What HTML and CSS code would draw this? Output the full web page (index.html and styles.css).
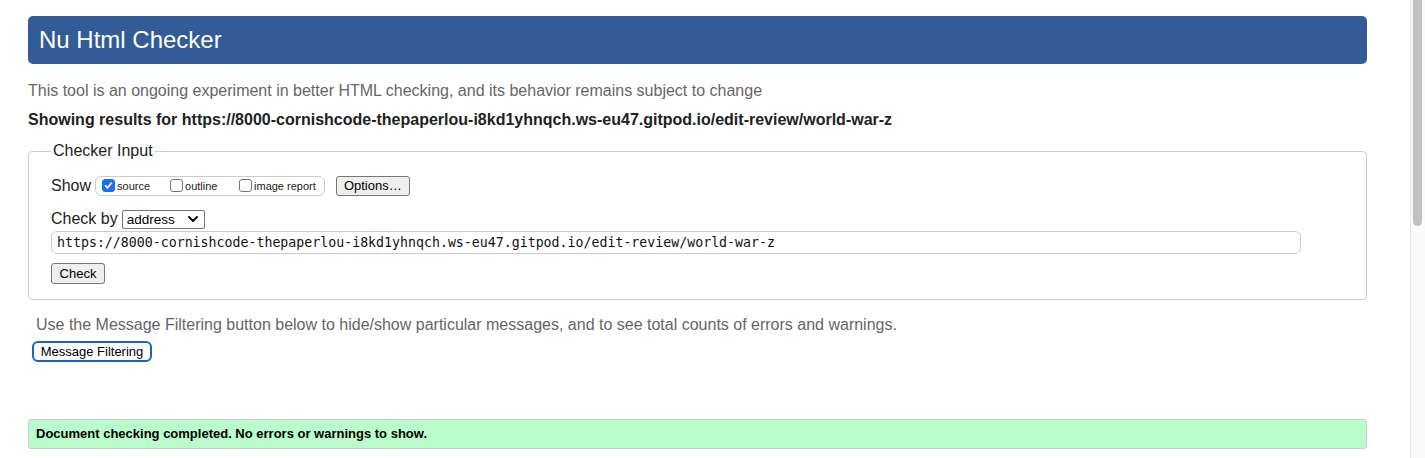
FILE: index.html
```html
<!DOCTYPE html>
<html>
<head>
<meta charset="utf-8">
<title>Nu Html Checker</title>
<link rel="stylesheet" href="styles.css">
</head>
<body>
<div class="page">
  <h1 class="header">Nu Html Checker</h1>
  <p class="intro">This tool is an ongoing experiment in better HTML checking, and its behavior remains subject to change</p>
  <p class="showing">Showing results for https://8000-cornishcode-thepaperlou-i8kd1yhnqch.ws-eu47.gitpod.io/edit-review/world-war-z</p>
  <fieldset class="checker">
    <legend class="legend">Checker Input</legend>
    <div class="row show-row">
      <span class="label">Show</span>
      <span class="show-box">
        <label class="opt"><span class="cb checked"><svg viewBox="0 0 13 13" width="13" height="13"><path d="M3 6.8 L5.4 9.2 L10 3.6" fill="none" stroke="#fff" stroke-width="2" stroke-linecap="round" stroke-linejoin="round"/></svg></span>source</label>
        <label class="opt"><span class="cb"></span>outline</label>
        <label class="opt"><span class="cb"></span>image report</label>
      </span>
      <button class="btn options">Options…</button>
    </div>
    <div class="row by-row">
      <span class="label">Check by</span>
      <span class="select">address<svg class="chev" viewBox="0 0 10 6" width="10" height="6"><path d="M1 1 L5 5 L9 1" fill="none" stroke="#000" stroke-width="1.8" stroke-linecap="round" stroke-linejoin="round"/></svg></span>
    </div>
    <div class="url">https://8000-cornishcode-thepaperlou-i8kd1yhnqch.ws-eu47.gitpod.io/edit-review/world-war-z</div>
    <div class="row"><button class="btn check">Check</button></div>
  </fieldset>
  <p class="filter-note">Use the Message Filtering button below to hide/show particular messages, and to see total counts of errors and warnings.</p>
  <button class="btn filtering">Message Filtering</button>
  <div class="success">Document checking completed. No errors or warnings to show.</div>
</div>
<div class="scrollbar"><div class="thumb"></div></div>
</body>
</html>
```
FILE: styles.css
```css
html, body {
  margin: 0;
  padding: 0;
  background: #fff;
  overflow: hidden;
  height: 458px;
}
body {
  font-family: "Liberation Sans", Arial, sans-serif;
  color: #000;
}
.page {
  width: 1339px;
  margin-left: 28px;
  padding-top: 16px;
}
.header {
  margin: 0;
  height: 48px;
  box-sizing: border-box;
  background: #335b96;
  border-radius: 5px;
  color: #fff;
  font-weight: normal;
  font-size: 24px;
  line-height: 48px;
  padding-left: 11px;
}
.intro {
  margin: 17px 0 0;
  font-size: 16px;
  line-height: 20px;
  color: #666;
}
.showing {
  margin: 9px 0 0;
  font-size: 16px;
  line-height: 20px;
  font-weight: bold;
  color: #222;
}
.checker {
  margin: 12px 0 0;
  padding: 8px 22px 15px;
  border: 1px solid #ccc;
  border-radius: 4px;
  min-width: 0;
}
.legend {
  padding: 0 2px;
  font-size: 16px;
  color: #222;
  margin-left: 0;
}
.row {
  display: flex;
  align-items: center;
}
.label {
  font-size: 16px;
  color: #222;
}
.show-row {
  height: 20px;
  margin-top: 8px;
}
.show-box {
  display: flex;
  align-items: center;
  margin-left: 4px;
  height: 18px;
  border: 1px solid #ccc;
  border-radius: 6px;
  padding: 0 8px 0 6px;
  gap: 0;
}
.opt {
  display: flex;
  align-items: center;
  font-size: 11px;
  color: #222;
}
.opt:nth-child(1) { width: 68px; }
.opt:nth-child(2) { width: 69px; }
.cb {
  width: 11px;
  height: 11px;
  border: 1px solid #767676;
  border-radius: 3px;
  margin-right: 2px;
  display: inline-flex;
  align-items: center;
  justify-content: center;
  box-sizing: content-box;
  position: relative;
  top: -1px;
}
.cb.checked {
  background: #1c6ef2;
  border-color: #1c6ef2;
}
.cb svg { width: 11px; height: 11px; }
.btn {
  font-family: "Liberation Sans", Arial, sans-serif;
  font-size: 13px;
  color: #000;
  background: #efefef;
  border: 1px solid #767676;
  border-radius: 3px;
  padding: 0 6px;
  height: 20px;
  line-height: 18px;
}
.options {
  margin-left: 11px;
  width: 74px;
}
.by-row {
  margin-top: 13px;
  height: 20px;
}
.select {
  margin-left: 4px;
  width: 83px;
  height: 19px;
  box-sizing: border-box;
  border: 1px solid #767676;
  border-radius: 2px;
  font-size: 13.5px;
  padding-left: 4px;
  display: flex;
  align-items: center;
  justify-content: space-between;
  padding-right: 6px;
}
.url {
  margin-top: 2px;
  width: 1250px;
  height: 23px;
  box-sizing: border-box;
  border: 1px solid #ccc;
  border-radius: 6px;
  font-family: "DejaVu Sans Mono", "Liberation Mono", monospace;
  font-size: 13.25px;
  line-height: 21px;
  padding-left: 5px;
  color: #111;
}
.check {
  margin-top: 9px;
  width: 54px;
  height: 21px;
}
.filter-note {
  margin: 15px 0 0 8px;
  font-size: 16px;
  line-height: 20px;
  color: #666;
}
.filtering {
  display: block;
  margin: 6px 0 0 4px;
  width: 120px;
  height: 21px;
  background: #fff;
  border: 2px solid #1a5fd0;
  border-radius: 6px;
  padding: 0;
  font-size: 13px;
  line-height: 16px;
}
.success {
  margin-top: 57px;
  height: 30px;
  box-sizing: border-box;
  background: #bbfccc;
  border: 1px solid #ccc;
  border-radius: 3px;
  font-size: 13px;
  font-weight: bold;
  line-height: 28px;
  padding-left: 7px;
}
.scrollbar {
  position: fixed;
  top: 0;
  right: 0;
  width: 15px;
  height: 458px;
  background: #fafafa;
  border-left: 1px solid #e8e8e8;
  box-sizing: border-box;
}
.thumb {
  margin-left: 2px;
  width: 9px;
  height: 226px;
  background: #c1c1c1;
  border-radius: 0 0 5px 5px;
}
```
